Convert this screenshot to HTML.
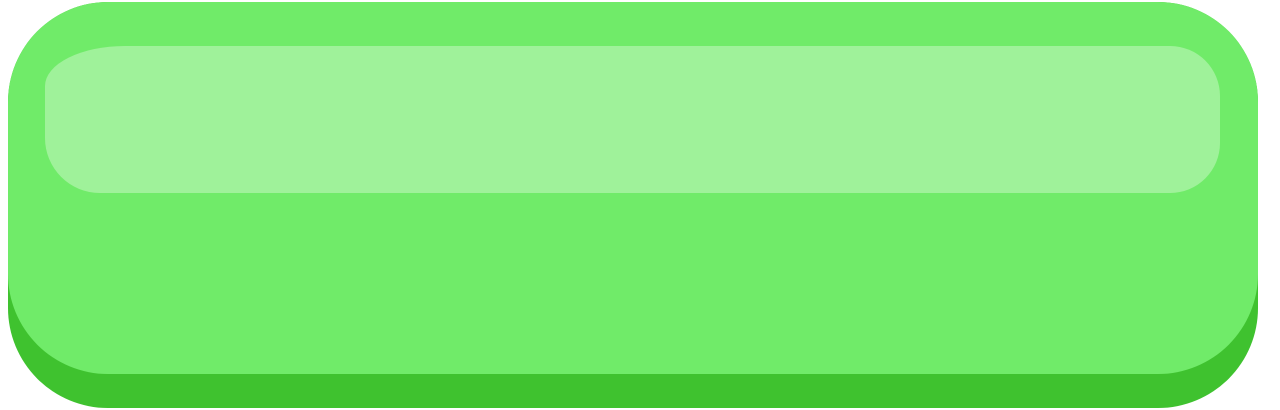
<!DOCTYPE html>
<html><head><style>
html,body{margin:0;padding:0;width:1280px;height:410px;background:#fff;overflow:hidden}
.base{position:absolute;left:8px;top:2px;width:1250px;height:406px;border-radius:100px;background:#3fc22f}
.face{position:absolute;left:8px;top:2px;width:1250px;height:372px;border-radius:100px;background:#70eb69}
.hl{position:absolute;left:45px;top:46px;width:1175px;height:147px;border-radius:80px 50px 50px 55px / 40px 50px 50px 55px;background:#9ff29a}
</style></head><body>
<div class="base"></div>
<div class="face"></div>
<div class="hl"></div>
</body></html>
